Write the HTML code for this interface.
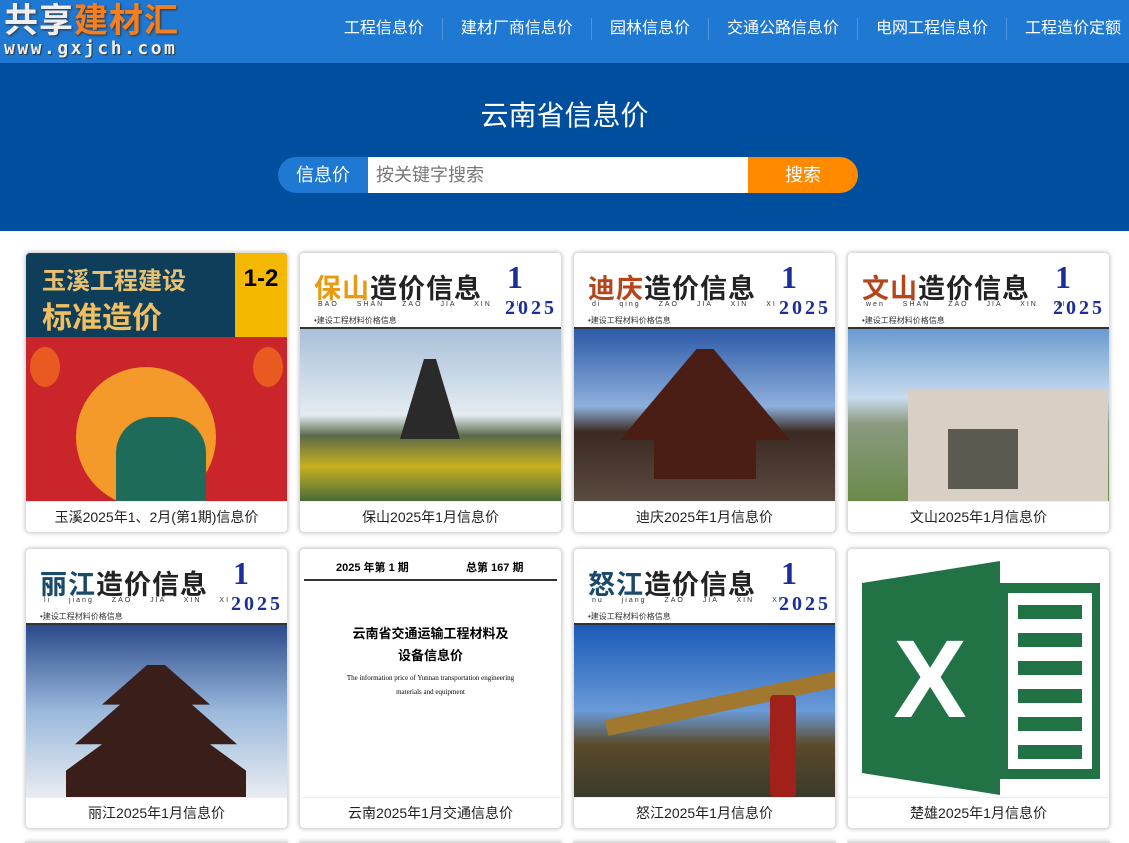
<!DOCTYPE html>
<html><head><meta charset="utf-8"><style>
*{margin:0;padding:0;box-sizing:border-box}
html,body{width:1129px;height:843px;overflow:hidden}
body{position:relative;background:#fff;font-family:"Liberation Sans","Noto Sans CJK SC",sans-serif}
.hd{height:63px;background:#1f78d1;position:relative}
.logo{position:absolute;left:4px;top:2px}
.logo .t{font-size:34px;font-weight:bold;line-height:38px;letter-spacing:1px;color:#eee;text-shadow:1px 1px 2px #333}
.logo .t span{color:#f57f1f}
.logo .u{font-size:18px;font-weight:bold;color:#eee;letter-spacing:2.5px;line-height:18px;text-shadow:1px 1px 1px #333;font-family:"DejaVu Sans Mono",monospace}
.nav{position:absolute;right:0;top:18px;display:flex;color:#fff;font-size:16px}
.nav div{padding:0 18px;border-left:1px solid #4d95dc;line-height:22px;white-space:nowrap}
.nav div:first-child{border:none}
.hero{height:168px;background:#004f9e;border-top:1px solid #0a4585;text-align:center;color:#fff}
.hero h1{font-size:28px;font-weight:normal;padding-top:32px;line-height:40px}
.sb{position:absolute;left:278px;top:157px;width:580px;height:36px;display:flex}
.sb .a{width:90px;background:#1f78d1;border-radius:18px 0 0 18px;color:#fff;font-size:18px;line-height:36px;text-align:center}
.sb .b{flex:1;background:#fff;color:#777;font-size:18px;line-height:36px;padding-left:8px}
.sb .c{width:110px;background:#ff8a00;border-radius:0 18px 18px 0;color:#fff;font-size:18px;line-height:36px;text-align:center}
.card{position:absolute;width:263px;height:281px;border:1px solid #ddd;border-radius:5px;box-shadow:0 0 4px rgba(0,0,0,.25);overflow:hidden;background:#fff}
.img{height:248px;position:relative;overflow:hidden}
.ph{height:172px;position:relative;overflow:hidden}
.cap{height:32px;border-top:1px solid #eee;font-size:14px;text-align:center;line-height:31px;color:#222}
.top{height:76px;background:#fff;position:relative;border-bottom:2px solid #333}
.top .n{position:absolute;left:14px;top:14px;font-size:27px;font-weight:bold;color:#222;letter-spacing:1px;white-space:nowrap}
.top .n span{color:#b5451b}
.top .p{position:absolute;left:18px;top:48px;font-size:7px;letter-spacing:2px;word-spacing:14px;color:#333;white-space:nowrap}
.top .o{position:absolute;right:38px;top:6px;font-size:32px;font-weight:bold;color:#1a2e9c;font-family:"Liberation Serif",serif}
.top .y{position:absolute;right:4px;top:44px;font-size:20px;font-weight:bold;color:#1a2e9c;letter-spacing:3px;font-family:"Liberation Serif",serif}
.top .s{position:absolute;left:14px;top:62px;font-size:8px;color:#333;white-space:nowrap}
.sh{position:absolute}
</style></head><body>
<div class="hd"><div class="logo"><div class="t">共享<span>建材汇</span></div><div class="u">www.gxjch.com</div></div>
<div class="nav"><div>工程信息价</div><div>建材厂商信息价</div><div>园林信息价</div><div>交通公路信息价</div><div>电网工程信息价</div><div style="padding-right:8px">工程造价定额</div></div></div>
<div class="hero"><h1>云南省信息价</h1></div>
<div class="sb"><div class="a">信息价</div><div class="b">按关键字搜索</div><div class="c">搜索</div></div>

<div class="card" style="left:25px;top:252px"><div class="img">
<div style="height:84px;background:#0e3e5a;position:relative"><div style="position:absolute;left:16px;top:8px;color:#e8c070;font-size:24px;font-weight:bold">玉溪工程建设</div><div style="position:absolute;left:16px;top:40px;color:#f0c060;font-size:30px;font-weight:bold">标准造价</div><div style="position:absolute;right:0;top:0;width:52px;height:84px;background:#f5b800;font-size:24px;font-weight:bold;text-align:center;padding-top:12px">1-2</div></div>
<div style="height:164px;background:#c9252b;position:relative;overflow:hidden"><div class="sh" style="left:50px;top:30px;width:140px;height:140px;border-radius:50%;background:#f39a2b"></div><div class="sh" style="left:90px;top:80px;width:90px;height:90px;border-radius:40% 40% 0 0;background:#1f6b5a"></div><div class="sh" style="left:4px;top:10px;width:30px;height:40px;border-radius:50%;background:#e85a20"></div><div class="sh" style="right:4px;top:10px;width:30px;height:40px;border-radius:50%;background:#e85a20"></div></div>
</div><div class="cap">玉溪2025年1、2月(第1期)信息价</div></div>

<div class="card" style="left:299px;top:252px"><div class="img"><div class="top"><div class="n"><span style="color:#e89a10">保山</span>造价信息</div><div class="p">BAO SHAN ZAO JIA XIN XI</div><div class="o">1</div><div class="y">2025</div><div class="s">•建设工程材料价格信息</div></div>
<div class="ph" style="background:linear-gradient(#a9c0d8,#e4ecf2 50%,#5a6a4a 62%,#c8b020 80%,#4a6a3a)"><div class="sh" style="left:100px;top:30px;width:60px;height:80px;background:#2a2a2a;clip-path:polygon(40% 0,60% 0,100% 100%,0 100%)"></div></div></div><div class="cap">保山2025年1月信息价</div></div>

<div class="card" style="left:573px;top:252px"><div class="img"><div class="top"><div class="n"><span>迪庆</span>造价信息</div><div class="p">di qing ZAO JIA XIN XI</div><div class="o">1</div><div class="y">2025</div><div class="s">•建设工程材料价格信息</div></div>
<div class="ph" style="background:linear-gradient(#2d5aa8,#8eb0dc 45%,#3a2a22 60%,#5a4a40)"><div class="sh" style="left:46px;top:20px;width:170px;height:130px;background:#4a1e14;clip-path:polygon(45% 0,55% 0,100% 70%,80% 70%,80% 100%,20% 100%,20% 70%,0 70%)"></div></div></div><div class="cap">迪庆2025年1月信息价</div></div>

<div class="card" style="left:847px;top:252px"><div class="img"><div class="top"><div class="n"><span>文山</span>造价信息</div><div class="p">wen SHAN ZAO JIA XIN XI</div><div class="o">1</div><div class="y">2025</div><div class="s">•建设工程材料价格信息</div></div>
<div class="ph" style="background:linear-gradient(#6a9ad0,#c8dcee 40%,#8a9a80 55%,#6a8a4a)"><div class="sh" style="left:60px;top:60px;width:200px;height:112px;background:#d8d0c4"></div><div class="sh" style="left:100px;top:100px;width:70px;height:60px;background:#5a5a50"></div></div></div><div class="cap">文山2025年1月信息价</div></div>

<div class="card" style="left:25px;top:548px"><div class="img"><div class="top"><div class="n"><span style="color:#1a4a6a">丽江</span>造价信息</div><div class="p">li jiang ZAO JIA XIN XI</div><div class="o">1</div><div class="y">2025</div><div class="s">•建设工程材料价格信息</div></div>
<div class="ph" style="background:linear-gradient(#2a4a8a,#9ab8dc 50%,#e8ecf0)"><div class="sh" style="left:40px;top:40px;width:180px;height:132px;background:#3a1e1a;clip-path:polygon(45% 0,55% 0,80% 30%,70% 30%,95% 60%,80% 60%,100% 80%,100% 100%,0 100%,0 80%,20% 60%,5% 60%,30% 30%,20% 30%)"></div></div></div><div class="cap">丽江2025年1月信息价</div></div>

<div class="card" style="left:299px;top:548px"><div class="img" style="font-family:'Liberation Serif','Noto Serif CJK SC',serif">
<div style="position:absolute;left:36px;top:10px;font-size:11px;font-weight:bold;font-family:'Liberation Sans','Noto Sans CJK SC',sans-serif">2025 年第 1 期</div><div style="position:absolute;left:166px;top:10px;font-size:11px;font-weight:bold;font-family:'Liberation Sans','Noto Sans CJK SC',sans-serif">总第 167 期</div>
<div style="position:absolute;left:4px;right:4px;top:30px;border-top:2px solid #333"></div>
<div style="position:absolute;left:0;right:0;top:74px;text-align:center;font-size:13px;font-weight:bold;line-height:22px;font-family:'Liberation Sans','Noto Sans CJK SC',sans-serif">云南省交通运输工程材料及<br>设备信息价</div>
<div style="position:absolute;left:40px;right:40px;top:122px;text-align:center;font-size:7px;line-height:14px">The information price of Yunnan transportation engineering materials and equipment</div></div><div class="cap">云南2025年1月交通信息价</div></div>

<div class="card" style="left:573px;top:548px"><div class="img"><div class="top"><div class="n"><span style="color:#1a4a6a">怒江</span>造价信息</div><div class="p">nu jiang ZAO JIA XIN XI</div><div class="o">1</div><div class="y">2025</div><div class="s">•建设工程材料价格信息</div></div>
<div class="ph" style="background:linear-gradient(#1a5ab8,#6a9ad8 50%,#5a4a2a 70%,#3a3a2a)"><div class="sh" style="left:30px;top:70px;width:240px;height:16px;background:#a07830;transform:rotate(-12deg)"></div><div class="sh" style="left:196px;top:70px;width:26px;height:102px;background:#a0201a;border-radius:4px"></div></div></div><div class="cap">怒江2025年1月信息价</div></div>

<div class="card" style="left:847px;top:548px"><div class="img">
<svg width="263" height="248" viewBox="0 0 263 248"><path d="M14 34 L152 12 L152 246 L14 224 Z" fill="#217346"/><rect x="152" y="34" width="100" height="196" fill="#217346"/><rect x="160" y="44" width="84" height="176" fill="#fff"/><g fill="#217346"><rect x="170" y="56" width="64" height="14"/><rect x="170" y="84" width="64" height="14"/><rect x="170" y="112" width="64" height="14"/><rect x="170" y="140" width="64" height="14"/><rect x="170" y="168" width="64" height="14"/><rect x="170" y="196" width="64" height="14"/></g><text x="82" y="168" font-size="110" font-weight="bold" fill="#fff" text-anchor="middle" font-family="Liberation Sans,sans-serif">X</text></svg>
</div><div class="cap">楚雄2025年1月信息价</div></div>

<div class="card" style="left:25px;top:841px;height:2px"></div><div class="card" style="left:299px;top:841px;height:2px"></div><div class="card" style="left:573px;top:841px;height:2px"></div><div class="card" style="left:847px;top:841px;height:2px"></div>
</body></html>
